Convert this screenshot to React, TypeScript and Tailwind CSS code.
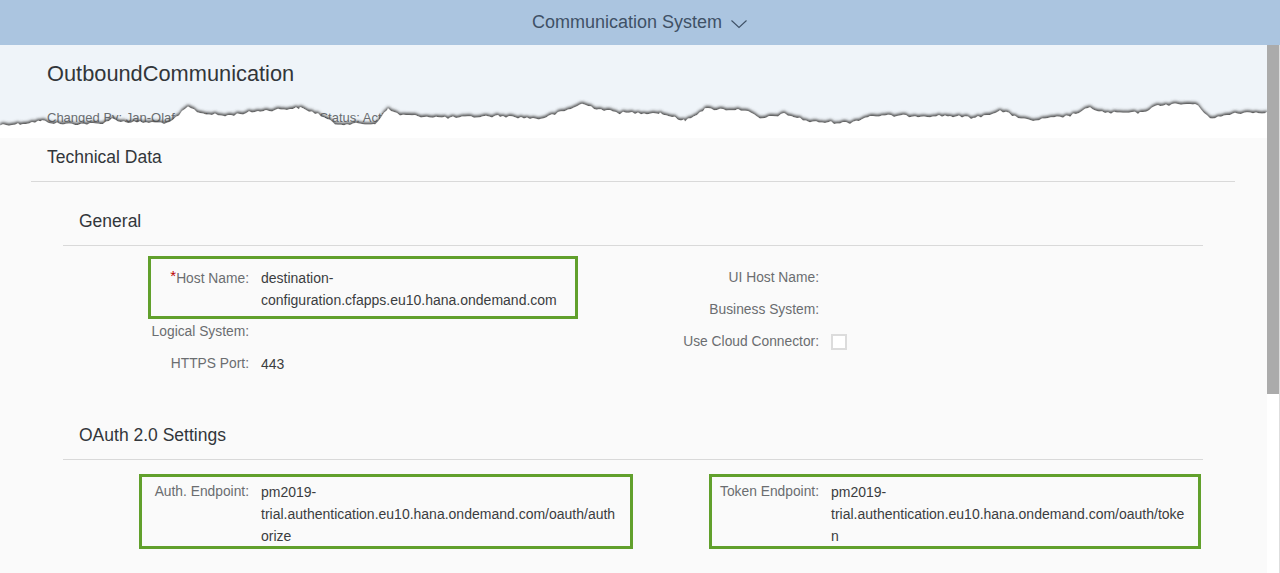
import React from "react";

function buildEdge(top: number): string {
  const ctrl: [number, number][] = [
    [0, 125], [20, 124], [42, 121], [60, 124], [100, 124], [112, 119], [125, 122], [170, 123],
    [188, 107], [200, 113], [225, 116], [260, 111], [300, 108], [318, 114], [335, 124], [375, 124],
    [388, 109], [400, 115], [450, 118], [500, 116], [540, 119], [565, 111], [582, 104], [598, 109],
    [620, 113], [660, 113], [685, 121], [705, 109], [745, 110], [760, 119], [785, 114], [810, 122],
    [850, 123], [870, 116], [950, 116], [975, 118], [1000, 111], [1030, 121], [1070, 116], [1090, 108],
    [1105, 113], [1140, 113], [1160, 105], [1195, 104], [1212, 119], [1235, 113], [1267, 112],
  ];
  let seed = 12345;
  const rand = () => {
    seed = (seed * 1103515245 + 12345) % 2147483648;
    return seed / 2147483648;
  };
  const pts: string[] = [];
  for (let i = 0; i < ctrl.length - 1; i++) {
    const [x0, y0] = ctrl[i];
    const [x1, y1] = ctrl[i + 1];
    for (let x = x0; x < x1; x += 3) {
      const t = (x - x0) / (x1 - x0);
      const y = y0 + (y1 - y0) * t + (rand() - 0.5) * 2.6;
      pts.push(`${x},${(y - top).toFixed(1)}`);
    }
  }
  pts.push(`1267,${112 - top}`);
  return `M${pts.join(" L")} L1267,70 L0,70 Z`;
}

const EDGE_TOP = 98;
const edgeD = buildEdge(EDGE_TOP);

function Row({
  label,
  children,
  required,
  box,
}: {
  label: string;
  children?: React.ReactNode;
  required?: boolean;
  box?: string;
}) {
  return (
    <div className="relative flex py-[5px] leading-[22px]">
      <div className="w-[186px] shrink-0 text-right text-[13.8px] text-[#6a6d70]">
        {required && <span className="text-[#bb0000] text-[15px] relative top-[-2px]">*</span>}
        {label}
      </div>
      <div className="ml-3 text-[14px] text-[#3a3d40]">{children}</div>
      {box && <div className={box} />}
    </div>
  );
}

export default function App() {
  return (
    <div className="w-[1280px] h-[573px] overflow-hidden flex flex-col bg-[#fafafa] font-['Liberation_Sans',Arial,sans-serif]">
      <div className="h-[45px] shrink-0 bg-[#abc5e0] flex items-center justify-center gap-[8px] text-[18px] text-[#3f5166]">
        <span className="leading-[24px] mt-[-2px]">Communication System</span>
        <svg width="18" height="10" viewBox="0 0 18 10" className="mt-[2px]">
          <polyline points="1.5,1.5 9,8.5 16.5,1.5" fill="none" stroke="#3f5166" strokeWidth="1.1" />
        </svg>
      </div>
      <div className="flex flex-1 min-h-0">
        <div className="flex-1 relative">
          <div className="h-[83px] bg-[#eff4f9] pl-[47px] pt-[15px]">
            <div className="text-[21.8px] leading-[28px] text-[#32363a]">OutboundCommunication</div>
            <div className="mt-[21px] flex text-[13px] leading-[18px] text-[#6a6d70]">
              <span>Changed By: Jan-Olaf Geicke</span>
              <span className="ml-[52px]">Sharing Status: Active</span>
            </div>
          </div>
          <svg
            className="absolute left-0 top-[53px]"
            width="1267"
            height="40"
            viewBox="0 0 1267 40"
          >
            <defs>
              <filter id="tear" x="-5%" y="-50%" width="110%" height="200%">
                <feDropShadow dx="0" dy="-2" stdDeviation="1.8" floodColor="#4a4a4a" floodOpacity="1" />
              </filter>
              <linearGradient id="fade" x1="0" y1="0" x2="0" y2="1">
                <stop offset="0.55" stopColor="#ffffff" />
                <stop offset="1" stopColor="#fafafa" />
              </linearGradient>
            </defs>
            <path d={edgeD} fill="url(#fade)" filter="url(#tear)" />
          </svg>
          <div className="pl-[31px] pr-[32px]">
            <div className="pt-[17px] pb-[12px] pl-4 text-[17.5px] leading-[24px] text-[#32363a] border-b border-[#d9d9d9]">
              Technical Data
            </div>
            <div className="mx-[32px]">
              <div className="pt-[27px] pb-[12px] pl-4 text-[17.5px] leading-[24px] text-[#32363a] border-b border-[#d9d9d9]">
                General
              </div>
              <div className="pt-4 grid grid-cols-2">
                <div>
                  <Row
                    label="Host Name:"
                    required
                    box="absolute left-[85px] top-[-6px] w-[430px] h-[63px] border-[3px] border-[#61a02c]"
                  >
                    destination-
                    <br />
                    configuration.cfapps.eu10.hana.ondemand.com
                  </Row>
                  <Row label="Logical System:" />
                  <Row label="HTTPS Port:">443</Row>
                </div>
                <div>
                  <Row label="UI Host Name:" />
                  <Row label="Business System:" />
                  <Row label="Use Cloud Connector:">
                    <div className="h-[22px] flex items-center">
                      <div className="w-[16px] h-[16px] border-2 border-[#dcdcdc] bg-white" />
                    </div>
                  </Row>
                </div>
              </div>
              <div className="pt-[43px] pb-[12px] pl-4 text-[17.5px] leading-[24px] text-[#32363a] border-b border-[#d9d9d9]">
                OAuth 2.0 Settings
              </div>
              <div className="pt-4 grid grid-cols-2">
                <div>
                  <Row
                    label="Auth. Endpoint:"
                    box="absolute left-[76px] top-[-2px] w-[494px] h-[75px] border-[3px] border-[#61a02c]"
                  >
                    pm2019-
                    <br />
                    trial.authentication.eu10.hana.ondemand.com/oauth/auth
                    <br />
                    orize
                  </Row>
                </div>
                <div>
                  <Row
                    label="Token Endpoint:"
                    box="absolute left-[76px] top-[-2px] w-[492px] h-[75px] border-[3px] border-[#61a02c]"
                  >
                    pm2019-
                    <br />
                    trial.authentication.eu10.hana.ondemand.com/oauth/toke
                    <br />
                    n
                  </Row>
                </div>
              </div>
            </div>
          </div>
        </div>
        <div className="w-[13px] shrink-0 flex flex-col bg-white border-r border-[#dedede]">
          <div className="h-[349px] w-[12px] bg-[#ababab]" />
        </div>
      </div>
    </div>
  );
}
